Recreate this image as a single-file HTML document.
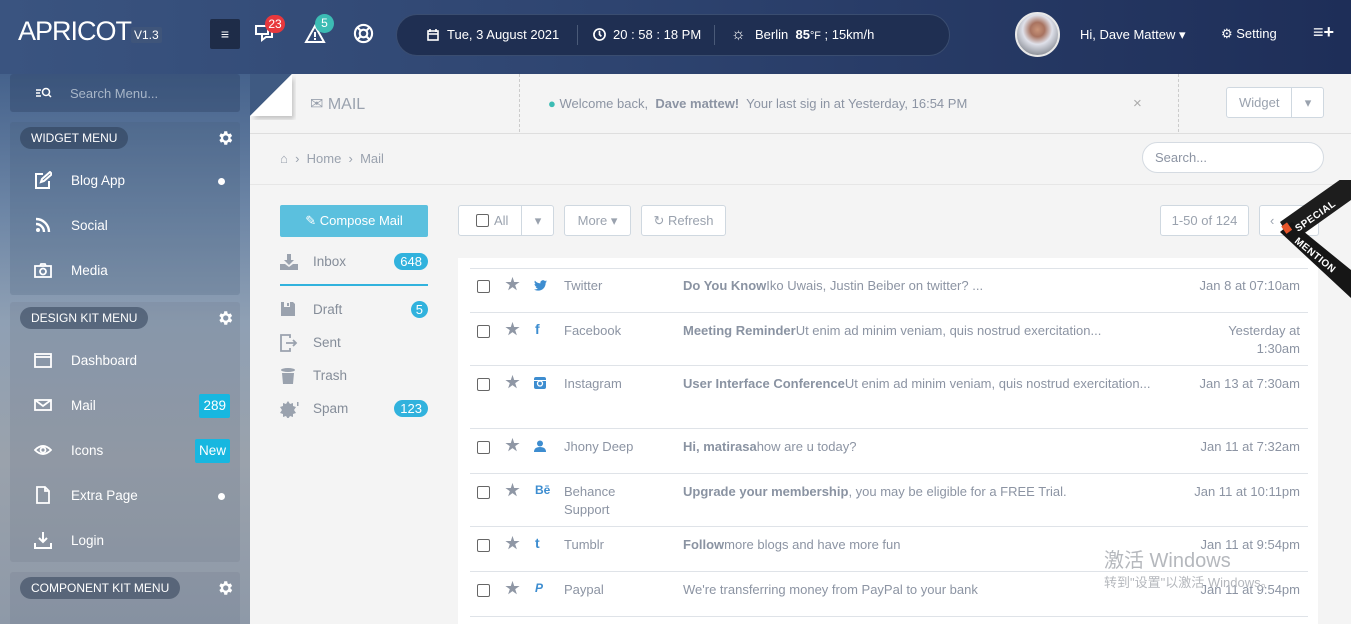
<!DOCTYPE html>
<html><head><meta charset="utf-8"><style>
*{margin:0;padding:0;box-sizing:border-box}
body{width:1351px;height:624px;overflow:hidden;position:relative;font-family:"Liberation Sans","Noto Sans CJK SC",sans-serif;font-size:13px;background:#f4f4f4;color:#8c94a3}
.a{position:absolute}
#hdr{left:0;top:0;width:1351px;height:74px;background:linear-gradient(90deg,#3a5480 0%,#2e4470 45%,#1e2e58 100%)}
#side{left:0;top:74px;width:250px;height:550px;overflow:hidden;background:linear-gradient(180deg,#45628c 0%,#6d86a6 25%,#8fa0b4 45%,#9aa2ac 70%,#8e99a8 100%)}
.box{position:absolute;left:10px;width:230px;background:rgba(70,90,120,.22);border-radius:3px}
.pill{position:absolute;left:10px;top:5px;height:22px;border-radius:11px;background:rgba(40,55,80,.5);color:#fff;font-size:12px;line-height:22px;padding:0 11px}
.gear{position:absolute;right:6px;top:7px}
.mi{position:absolute;left:0;width:230px;color:#fff;font-size:13.5px;height:18px;line-height:18px}
.mi svg{position:absolute;left:24px;top:-1px}
.mi .t{position:absolute;left:61px}
.dot{position:absolute;right:15px;top:6px;width:7px;height:7px;border-radius:50%;background:#fff}
.bdg{position:absolute;right:10px;background:#17b7e0;color:#fff;padding:0 4px;line-height:24px;top:-3px;border-radius:2px}
.rowl{position:absolute;left:470px;width:838px;height:1px;background:#dfe3e8}
.r{position:absolute;left:458px;width:860px;font-size:13px;color:#8c94a3}
.cb{position:absolute;left:19px;width:13px;height:13px;border:1px solid #666;border-radius:2px;background:#fff}
.st{position:absolute;left:47px;color:#8f97a5;font-size:15px;line-height:15px}
.so{position:absolute;left:77px;color:#3d8dd0;font-weight:bold;font-size:12px}
.nm{position:absolute;left:106px;line-height:18px}
.sb{position:absolute;left:225px;width:470px;line-height:18px}
.sb b{color:#8a93a2}
.dt{position:absolute;right:18px;text-align:right;line-height:18px}
.btn{position:absolute;border:1px solid #cfd8e0;border-radius:3px;background:#fff;height:31px;line-height:29px;color:#9aa2ae;font-size:13px;text-align:center}
.fl{position:absolute;left:280px;width:148px;font-size:13.5px;color:#858d99;height:18px;line-height:18px}
.fl .t{position:absolute;left:33px}
.fl svg{position:absolute;left:0;top:0}
.fl .n{position:absolute;right:0;background:#31b2dd;color:#fff;border-radius:9px;padding:0 6px;line-height:17px;font-size:13px}
</style></head><body>
<div id="hdr" class="a">
 <div class="a" style="left:18px;top:16px;color:#fff;font-size:27px;letter-spacing:-1px">APRICOT</div>
 <div class="a" style="left:131px;top:27px;background:#3f557a;color:#fff;font-size:12px;padding:1px 3px;border-radius:2px">V1.3</div>
 <div class="a" style="left:210px;top:19px;width:30px;height:30px;background:#1e2c48;border-radius:2px;color:#fff;text-align:center;line-height:30px;font-size:14px">≡</div>
 <svg class="a" style="left:254px;top:23px" width="24" height="22" viewBox="0 0 24 22" fill="none" stroke="#fff" stroke-width="2"><rect x="2" y="3" width="12" height="8"/><path d="M8 11v6l4-3h6v-8h-4"/></svg>
 <div class="a" style="left:265px;top:15px;width:20px;height:18px;border-radius:9px;background:#e8383d;color:#fff;font-size:12px;text-align:center;line-height:18px">23</div>
 <svg class="a" style="left:304px;top:24px" width="22" height="20" viewBox="0 0 22 20"><path d="M11 2L2 18h18z" fill="none" stroke="#fff" stroke-width="2"/><rect x="10" y="8" width="2" height="5" fill="#fff"/><rect x="10" y="14" width="2" height="2" fill="#fff"/></svg>
 <div class="a" style="left:315px;top:14px;width:19px;height:19px;border-radius:50%;background:#3cbcb4;color:#fff;font-size:12px;text-align:center;line-height:19px">5</div>
 <svg class="a" style="left:353px;top:23px" width="21" height="21" viewBox="0 0 22 22" fill="none" stroke="#fff" stroke-width="2.2"><circle cx="11" cy="11" r="9"/><circle cx="11" cy="11" r="4"/><path d="M5 5l3 3M17 5l-3 3M5 17l3-3M17 17l-3-3"/></svg>
 <div class="a" style="left:396px;top:14px;width:554px;height:42px;border-radius:21px;background:#1f2f52;border:1px solid #3a4d70;color:#fff;font-size:13px;line-height:40px">
  <svg class="a" style="left:30px;top:14px" width="12" height="12" viewBox="0 0 12 12" fill="none" stroke="#fff" stroke-width="1.6"><rect x="1" y="2" width="10" height="9"/><path d="M1 5h10M3 0v3M9 0v3"/></svg>
  <span class="a" style="left:50px">Tue, 3 August 2021</span>
  <span class="a" style="left:180px;top:10px;width:1px;height:20px;background:#4a5a78"></span>
  <svg class="a" style="left:196px;top:13px" width="13" height="13" viewBox="0 0 14 14" fill="none" stroke="#fff" stroke-width="1.8"><circle cx="7" cy="7" r="6"/><path d="M7 3v4l2 2"/></svg>
  <span class="a" style="left:216px">20 : 58 : 18 PM</span>
  <span class="a" style="left:317px;top:10px;width:1px;height:20px;background:#4a5a78"></span>
  <span class="a" style="left:334px;font-size:16px">☼</span><span class="a" style="left:358px">Berlin &nbsp;<b>85</b><small>°F</small> ; 15km/h</span>
 </div>
 <div class="a" style="left:1015px;top:12px;width:45px;height:45px;border-radius:50%;background:radial-gradient(circle at 50% 38%,#c99479 0,#a87360 22%,#dfe1ea 45%,#8a8e96 80%,#555 100%);border:2px solid #e8e8e8"></div>
 <div class="a" style="left:1080px;top:27px;color:#fff;font-size:13px">Hi, Dave Mattew ▾</div>
 <div class="a" style="left:1221px;top:26px;color:#fff;font-size:13px">⚙ Setting</div>
 <div class="a" style="left:1313px;top:22px;color:#fff;font-size:18px;font-weight:bold">≡+</div>
</div>
<div id="side" class="a">
 <div class="box" style="top:0;height:38px;background:rgba(40,60,95,.35)"><svg class="a" style="left:26px;top:13px" width="16" height="12" viewBox="0 0 16 12" fill="none" stroke="#fff" stroke-width="1.5"><path d="M0 3h5M0 6h4M0 9h5"/><circle cx="10" cy="5" r="3.5"/><path d="M12.5 7.5L15 10"/></svg><span class="a" style="left:60px;top:12px;color:#a8b6c8;font-size:13px">Search Menu...</span></div>
 <div class="box" style="top:48px;height:173px">
  <div class="pill">WIDGET MENU</div>
  <svg class="gear" width="18" height="18" viewBox="0 0 24 24"><path fill="#fff" d="M19.4 13a7.5 7.5 0 000-2l2.1-1.6-2-3.5-2.5 1a7.3 7.3 0 00-1.7-1L15 3h-4l-.4 2.9a7.3 7.3 0 00-1.7 1l-2.5-1-2 3.5L6.6 11a7.5 7.5 0 000 2l-2.1 1.6 2 3.5 2.5-1a7.3 7.3 0 001.7 1L11 21h4l.4-2.9a7.3 7.3 0 001.7-1l2.5 1 2-3.5zM13 15.5a3.5 3.5 0 110-7 3.5 3.5 0 010 7z"/></svg>
  <div class="mi" style="top:50px"><svg width="18" height="18" viewBox="0 0 18 18" fill="none" stroke="#fff" stroke-width="2"><path d="M9 3H2v14h13v-7"/><path d="M7 11l1-3 8-7 2 2-8 7z"/></svg><span class="t">Blog App</span><span class="dot"></span></div>
  <div class="mi" style="top:95px"><svg width="18" height="18" viewBox="0 0 18 18" fill="none" stroke="#fff" stroke-width="2.4"><circle cx="4" cy="14" r="2" fill="#fff" stroke="none"/><path d="M2 8a8 8 0 018 8M2 3a13 13 0 0113 13"/></svg><span class="t">Social</span></div>
  <div class="mi" style="top:140px"><svg width="18" height="18" viewBox="0 0 18 18" fill="none" stroke="#fff" stroke-width="1.8"><rect x="1" y="5" width="16" height="11"/><path d="M6 5l1-2h4l1 2"/><circle cx="9" cy="10.5" r="3"/></svg><span class="t">Media</span></div>
 </div>
 <div class="box" style="top:228px;height:260px;background:rgba(110,120,135,.22)">
  <div class="pill">DESIGN KIT MENU</div>
  <svg class="gear" width="18" height="18" viewBox="0 0 24 24"><path fill="#fff" d="M19.4 13a7.5 7.5 0 000-2l2.1-1.6-2-3.5-2.5 1a7.3 7.3 0 00-1.7-1L15 3h-4l-.4 2.9a7.3 7.3 0 00-1.7 1l-2.5-1-2 3.5L6.6 11a7.5 7.5 0 000 2l-2.1 1.6 2 3.5 2.5-1a7.3 7.3 0 001.7 1L11 21h4l.4-2.9a7.3 7.3 0 001.7-1l2.5 1 2-3.5zM13 15.5a3.5 3.5 0 110-7 3.5 3.5 0 010 7z"/></svg>
  <div class="mi" style="top:50px"><svg width="18" height="18" viewBox="0 0 18 18" fill="none" stroke="#fff" stroke-width="1.8"><rect x="1" y="3" width="16" height="13"/><path d="M1 6h16"/></svg><span class="t">Dashboard</span></div>
  <div class="mi" style="top:95px"><svg width="18" height="18" viewBox="0 0 18 18" fill="none" stroke="#fff" stroke-width="1.8"><rect x="1" y="4" width="16" height="10"/><path d="M1 4l8 6 8-6"/></svg><span class="t">Mail</span><span class="bdg">289</span></div>
  <div class="mi" style="top:140px"><svg width="18" height="18" viewBox="0 0 18 18" fill="none" stroke="#fff" stroke-width="1.8"><path d="M1 9q8-8 16 0q-8 8-16 0z"/><circle cx="9" cy="9" r="2.5"/></svg><span class="t">Icons</span><span class="bdg">New</span></div>
  <div class="mi" style="top:185px"><svg width="18" height="18" viewBox="0 0 18 18" fill="none" stroke="#fff" stroke-width="1.8"><path d="M3 1h8l4 4v12H3z M11 1v4h4"/></svg><span class="t">Extra Page</span><span class="dot"></span></div>
  <div class="mi" style="top:230px"><svg width="18" height="18" viewBox="0 0 18 18" fill="none" stroke="#fff" stroke-width="2"><path d="M9 1v10M5 7l4 4 4-4M1 12v5h16v-5"/></svg><span class="t">Login</span></div>
 </div>
 <div class="box" style="top:498px;height:60px;background:rgba(110,120,135,.22)">
  <div class="pill">COMPONENT KIT MENU</div>
  <svg class="gear" width="18" height="18" viewBox="0 0 24 24"><path fill="#fff" d="M19.4 13a7.5 7.5 0 000-2l2.1-1.6-2-3.5-2.5 1a7.3 7.3 0 00-1.7-1L15 3h-4l-.4 2.9a7.3 7.3 0 00-1.7 1l-2.5-1-2 3.5L6.6 11a7.5 7.5 0 000 2l-2.1 1.6 2 3.5 2.5-1a7.3 7.3 0 001.7 1L11 21h4l.4-2.9a7.3 7.3 0 001.7-1l2.5 1 2-3.5zM13 15.5a3.5 3.5 0 110-7 3.5 3.5 0 010 7z"/></svg>
 </div>
</div>
<!-- top bar -->
<div class="a" style="left:250px;top:74px;width:1101px;height:60px;background:#f4f4f4;border-bottom:1px solid #dedede"></div>
<svg class="a" style="left:250px;top:74px" width="46" height="46"><defs><filter id="sh"><feDropShadow dx="2" dy="3" stdDeviation="2" flood-opacity=".2"/></filter></defs><polygon points="0,0 42,0 0,42" fill="#3f5a82"/><polygon points="42,0 42,42 0,42" fill="#fff" filter="url(#sh)"/></svg>
<div class="a" style="left:310px;top:94px;color:#9aa2ae;font-size:16px">✉ MAIL</div>
<div class="a" style="left:519px;top:74px;height:58px;border-left:1px dashed #ccc"></div>
<div class="a" style="left:548px;top:96px;color:#8c94a3;font-size:13px"><span style="color:#3cbcb4">●</span> Welcome back, &nbsp;<b>Dave mattew!</b>&nbsp; Your last sig in at Yesterday, 16:54 PM</div>
<div class="a" style="left:1133px;top:95px;color:#aaa;font-size:15px">×</div>
<div class="a" style="left:1178px;top:74px;height:58px;border-left:1px dashed #ccc"></div>
<div class="btn" style="left:1226px;top:87px;width:98px"><span class="a" style="left:12px">Widget</span><span class="a" style="left:64px;top:0;height:29px;border-left:1px solid #cfd8e0;width:33px">▾</span></div>
<!-- breadcrumb -->
<div class="a" style="left:280px;top:151px;font-size:13px;color:#9aa2ae">⌂ &nbsp;› &nbsp;Home &nbsp;› &nbsp;Mail</div>
<div class="a" style="left:1142px;top:142px;width:182px;height:31px;border:1px solid #d5dbe2;border-radius:16px;background:#fff;padding-left:12px;line-height:29px;color:#8c94a3;font-size:13px">Search...</div>
<div class="a" style="left:250px;top:184px;width:1101px;height:1px;background:#e6e6e6"></div>
<!-- folders -->
<div class="a" style="left:280px;top:205px;width:148px;height:32px;background:#5bc0de;border-radius:2px;color:#fff;font-size:13px;line-height:32px;text-align:center">✎ Compose Mail</div>
<div class="fl" style="top:253px"><svg width="18" height="18" viewBox="0 0 18 18" fill="#9aa2ae"><path d="M7 1h4v6h3l-5 5-5-5h3z"/><path d="M0 11h5l4 3 4-3h5v6H0z"/></svg><span class="t">Inbox</span><span class="n">648</span></div>
<div class="a" style="left:280px;top:284px;width:148px;height:2px;background:#31b2dd"></div>
<div class="fl" style="top:301px"><svg width="16" height="16" viewBox="0 0 16 16" fill="#9aa2ae"><path d="M1 1h12l2 2v12H1z"/><rect x="4" y="1" width="6" height="5" fill="#f4f4f4"/><rect x="7" y="2" width="2" height="3"/></svg><span class="t">Draft</span><span class="n" style="padding:0 5px">5</span></div>
<div class="fl" style="top:334px"><svg width="18" height="18" viewBox="0 0 18 18" fill="none" stroke="#9aa2ae" stroke-width="1.8"><path d="M10 4V1H1v16h9v-3M6 9h10M13 6l3 3-3 3"/></svg><span class="t">Sent</span></div>
<div class="fl" style="top:367px"><svg width="16" height="18" viewBox="0 0 16 18" fill="#9aa2ae"><ellipse cx="8" cy="3" rx="7" ry="2"/><path d="M2 6h12l-1 11H3z"/></svg><span class="t">Trash</span></div>
<div class="fl" style="top:400px"><svg width="20" height="18" viewBox="0 0 20 18" fill="#9aa2ae"><path d="M8 1l2 3 3-1 0 3 3 1-2 3 2 3-3 1 0 3-3-1-2 3-2-3-3 1 0-3-3-1 2-3-2-3 3-1 0-3 3 1z"/><rect x="17" y="2" width="1.5" height="4"/></svg><span class="t">Spam</span><span class="n">123</span></div>
<!-- toolbar -->
<div class="btn" style="left:458px;top:205px;width:96px"><span class="a" style="left:17px;top:8px;width:13px;height:13px;border:1px solid #666;border-radius:2px"></span><span class="a" style="left:35px">All</span><span class="a" style="left:62px;top:0;height:29px;border-left:1px solid #cfd8e0;width:33px">▾</span></div>
<div class="btn" style="left:564px;top:205px;width:67px">More ▾</div>
<div class="btn" style="left:641px;top:205px;width:85px">↻ Refresh</div>
<div class="btn" style="left:1160px;top:205px;width:89px">1-50 of 124</div>
<div class="btn" style="left:1259px;top:205px;width:60px"><span class="a" style="left:10px">‹</span></div>
<!-- list -->
<div class="a" style="left:458px;top:258px;width:860px;height:366px;background:#fff"></div>
<div class="rowl" style="top:268px"></div><div class="rowl" style="top:312px"></div><div class="rowl" style="top:365px"></div><div class="rowl" style="top:428px"></div><div class="rowl" style="top:473px"></div><div class="rowl" style="top:526px"></div><div class="rowl" style="top:571px"></div><div class="rowl" style="top:616px"></div>
<div class="r" style="top:277px"><span class="cb" style="top:3px"></span><span class="st">★</span><svg class="a" style="left:76px;top:3px" width="13" height="11" viewBox="0 0 24 20"><path fill="#3d8dd0" d="M24 2.4a10 10 0 01-2.8.8A5 5 0 0023.3.5a10 10 0 01-3.1 1.2A4.9 4.9 0 0011.8 6 14 14 0 011.7.9a4.9 4.9 0 001.5 6.6 4.9 4.9 0 01-2.2-.6 4.9 4.9 0 003.9 4.9 4.9 4.9 0 01-2.2.1 4.9 4.9 0 004.6 3.4A9.9 9.9 0 010 17.3 14 14 0 007.5 19.5c9.1 0 14-7.5 14-14v-.6A10 10 0 0024 2.4z"/></svg><span class="nm">Twitter</span><span class="sb"><b>Do You Know</b>Iko Uwais, Justin Beiber on twitter? ...</span><span class="dt">Jan 8 at 07:10am</span></div>
<div class="r" style="top:322px"><span class="cb" style="top:3px"></span><span class="st">★</span><span class="so" style="font-size:14px;top:-1px">f</span><span class="nm">Facebook</span><span class="sb"><b>Meeting Reminder</b>Ut enim ad minim veniam, quis nostrud exercitation...</span><span class="dt">Yesterday at<br>1:30am</span></div>
<div class="r" style="top:375px"><span class="cb" style="top:3px"></span><span class="st">★</span><svg class="a" style="left:76px;top:2px" width="12" height="12" viewBox="0 0 12 12"><rect width="12" height="12" rx="2" fill="#3d8dd0"/><circle cx="6" cy="6.5" r="2.5" fill="none" stroke="#fff" stroke-width="1.3"/><rect x="0" y="3" width="12" height="1" fill="#fff"/></svg><span class="nm">Instagram</span><span class="sb"><b>User Interface Conference</b>Ut enim ad minim veniam, quis nostrud exercitation...</span><span class="dt">Jan 13 at 7:30am</span></div>
<div class="r" style="top:438px"><span class="cb" style="top:3px"></span><span class="st">★</span><svg class="a" style="left:76px;top:2px" width="12" height="12" viewBox="0 0 12 12" fill="#3d8dd0"><circle cx="6" cy="3.5" r="3"/><path d="M0 12q0-5 6-5t6 5z"/></svg><span class="nm">Jhony Deep</span><span class="sb"><b>Hi, matirasa</b>how are u today?</span><span class="dt">Jan 11 at 7:32am</span></div>
<div class="r" style="top:483px"><span class="cb" style="top:3px"></span><span class="st">★</span><span class="so">Bē</span><span class="nm">Behance<br>Support</span><span class="sb"><b>Upgrade your membership</b>, you may be eligible for a FREE Trial.</span><span class="dt">Jan 11 at 10:11pm</span></div>
<div class="r" style="top:536px"><span class="cb" style="top:3px"></span><span class="st">★</span><span class="so" style="font-size:14px;top:-1px">t</span><span class="nm">Tumblr</span><span class="sb"><b>Follow</b>more blogs and have more fun</span><span class="dt">Jan 11 at 9:54pm</span></div>
<div class="r" style="top:581px"><span class="cb" style="top:3px"></span><span class="st">★</span><span class="so" style="font-style:italic">P</span><span class="nm">Paypal</span><span class="sb">We're transferring money from PayPal to your bank</span><span class="dt">Jan 11 at 9:54pm</span></div>
<!-- ribbon -->
<svg class="a" style="left:1270px;top:180px" width="81" height="130" viewBox="0 0 81 130">
 <polygon points="10,42 81,-8 81,20 22,62" fill="#1d1d1d"/>
 <polygon points="10,52 22,42 81,90 81,118" fill="#161616"/>
 <rect x="13" y="44" width="7" height="9" fill="#e8552a" transform="rotate(-35 16 48)"/>
 <text x="0" y="0" transform="translate(28,52) rotate(-35)" fill="#fff" font-size="10" font-weight="bold" font-family="Liberation Sans" letter-spacing="0.5">SPECIAL</text>
 <text x="0" y="0" transform="translate(24,62) rotate(39)" fill="#fff" font-size="10" font-weight="bold" font-family="Liberation Sans" letter-spacing="0.5">MENTION</text>
</svg>
<div class="a" style="left:1104px;top:544px;color:#b5b8bd;font-size:20px">激活 Windows</div>
<div class="a" style="left:1104px;top:572px;color:#b5b8bd;font-size:13px">转到"设置"以激活 Windows。</div>
</body></html>
